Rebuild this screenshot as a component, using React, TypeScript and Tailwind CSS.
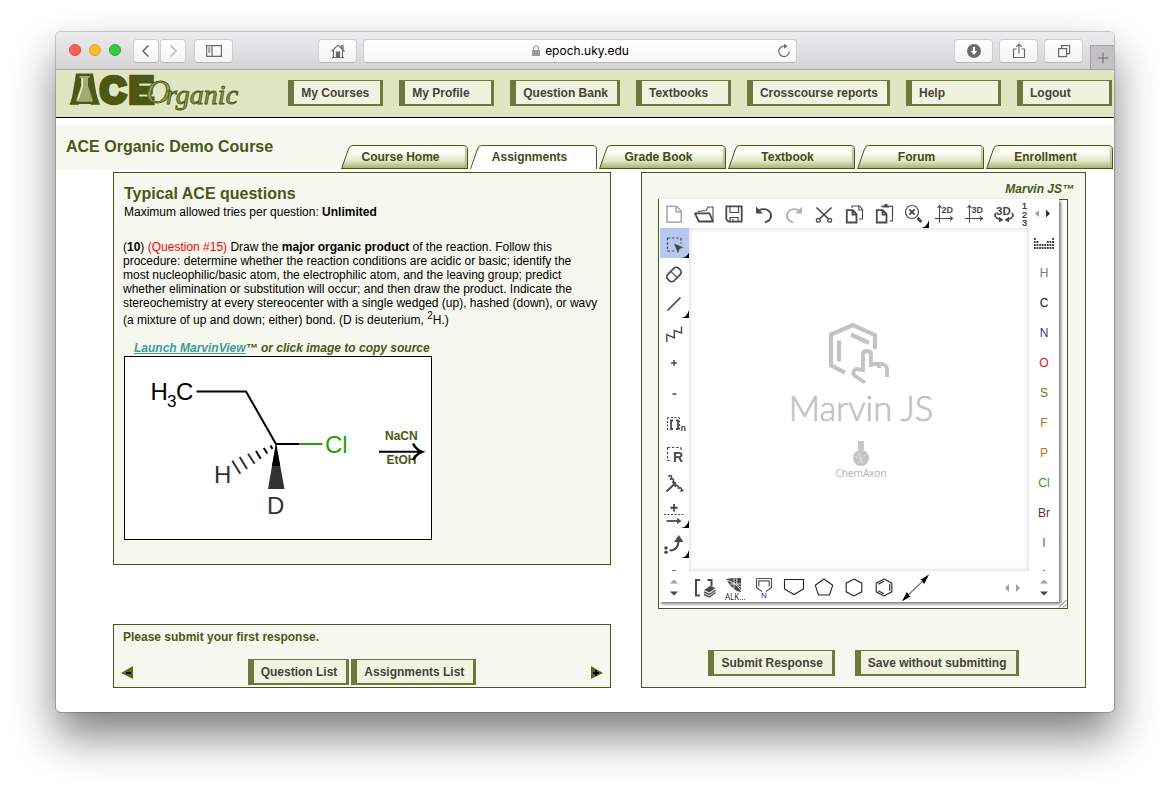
import React from "react";

type Kids = { children: React.ReactNode };

const boxed =
  "inline-block h-[26px] cursor-pointer whitespace-nowrap border-t border-r-[3px] border-b-2 border-l-[6px] border-[#6f783c] bg-[#f0f3df] pt-0.5 pr-[9px] pl-[7px] text-left text-xs leading-[21px] font-bold text-[#44443a]";

function ChromeButton({ label, className, children }: Kids & { label: string; className: string }) {
  return (
    <button
      type="button"
      aria-label={label}
      className={`flex h-6 items-center justify-center rounded border border-[#cfcdcf] border-b-[#b8b6b8] bg-linear-to-b from-white to-[#f4f3f4] ${className}`}
    >
      {children}
    </button>
  );
}

function Glyph({ children, w = 16, h = 16 }: Kids & { w?: number; h?: number }) {
  return (
    <svg width={w} height={h} viewBox={`0 0 ${w} ${h}`} fill="none" stroke="#6b6b6b" strokeWidth="1.2" aria-hidden="true">
      {children}
    </svg>
  );
}

function TitleBar() {
  return (
    <div className="flex h-[38px] items-start rounded-t-[5px] border-b border-[#a3a2a3] bg-linear-to-b from-[#edecee] to-[#d4d2d5] pt-[7px]">
      <div className="flex gap-2 pt-[5px] pl-[13px]">
        <span className="size-3 rounded-full border border-[#e2463f] bg-[#fc605b]" />
        <span className="size-3 rounded-full border border-[#dfa023] bg-[#fdbc2e]" />
        <span className="size-3 rounded-full border border-[#27a931] bg-[#35cb3c]" />
      </div>
      <div className="ml-3 flex gap-px">
        <ChromeButton label="Back" className="w-[26px]">
          <Glyph><path d="M10.500 2.500 5 8l5.500 5.500" strokeWidth="1.600" /></Glyph>
        </ChromeButton>
        <ChromeButton label="Forward" className="w-[26px]">
          <Glyph><path d="M5.500 2.500 11 8l-5.500 5.500" stroke="#bdbdbd" strokeWidth="1.600" /></Glyph>
        </ChromeButton>
      </div>
      <ChromeButton label="Show sidebar" className="ml-2 w-[39px]">
        <Glyph>
          <path d="M.6 2.600h14.800v10.800H.6zM6 2.600v10.800M2 5h2.500M2 7h2.500M2 9h2.500" />
        </Glyph>
      </ChromeButton>
      <ChromeButton label="Home" className="ml-[85px] w-[39px]">
        <Glyph>
          <path d="M1.500 8.500 8 2l6.500 6.500M3.500 7v7.400M12.500 7v7.400M2 14.500h12M11.500 5V2.500h1.500v4" />
          <path d="M6.500 9h3v5h-3z" fill="#6b6b6b" />
        </Glyph>
      </ChromeButton>
      <div className="ml-1.5 flex h-6 flex-1 items-center rounded border border-[#cfcdcf] border-b-[#b8b6b8] bg-linear-to-b from-white to-[#f7f7f7] px-1">
        <div className="flex flex-1 items-center justify-center gap-1 pl-4 font-[Inter,sans-serif] text-xs text-black">
          <svg width="10" height="12" viewBox="0 0 10 12" aria-hidden="true">
            <path d="M1 5h8v6H1z" fill="#999" />
            <path d="M2.500 5V3.500a2.500 2.500 0 0 1 5 0V5" fill="none" stroke="#999" strokeWidth="1.200" />
          </svg>
          <span>epoch.uky.edu</span>
        </div>
        <button type="button" aria-label="Reload">
          <Glyph>
            <path d="M9.500 3.200H8A5.200 5.200 0 1 0 13.200 8.500" />
            <path d="M8 .7v5L11.700 3.200z" fill="#6b6b6b" stroke="none" />
          </Glyph>
        </button>
      </div>
      <div className="ml-[157px] flex gap-1.5">
        <ChromeButton label="Downloads" className="w-[39px]">
          <Glyph>
            <circle cx="8" cy="8" r="7" fill="#6b6b6b" stroke="none" />
            <path d="M8 4v5" stroke="#fff" strokeWidth="2.200" />
            <path d="M4.800 8h6.400L8 12z" fill="#fff" stroke="none" />
          </Glyph>
        </ChromeButton>
        <ChromeButton label="Share" className="w-[39px]">
          <Glyph><path d="M5.500 6h-3v8.500h11V6h-3M8 10.500V1.200M5.200 3.800 8 1l2.800 2.800" /></Glyph>
        </ChromeButton>
        <ChromeButton label="Show all tabs" className="w-[39px]">
          <Glyph><path d="M2.600 5.600h8v8h-8zM5.600 5.600v-3h8v8h-3" /></Glyph>
        </ChromeButton>
      </div>
      <button type="button" aria-label="New tab" className="mt-1.5 ml-[7px] flex h-6 w-6 items-center justify-center border-t border-l border-[#a3a2a3] bg-[#c3c1c4]">
        <Glyph><path d="M8 2.500v11M2.500 8h11" strokeWidth="1" /></Glyph>
      </button>
    </div>
  );
}

function Logo() {
  return (
    <svg width="182" height="47" viewBox="0 0 182 47" className="shrink-0" role="img" aria-label="ACE Organic">
      <g fill="#4c5814" stroke="#4c5814" fontFamily="'Liberation Sans', sans-serif" fontWeight="700">
        <text x="4" y="32.500" fontSize="38" strokeWidth="3.500">A</text>
        <text x="33" y="32.500" fontSize="36" strokeWidth="4.500">C</text>
        <text x="62" y="32.500" fontSize="37" strokeWidth="4.500">E</text>
      </g>
      <path d="M9 3.500h17L31 34H4z" fill="#4c5814" />
      <path d="M12.500 6h10v2H21v8l4.800 14q.4 1.800-1.300 1.800h-14q-1.700 0-1.300-1.800L14 16V8h-1.500z" fill="#a3ab72" />
      <path d="M15.300 8v8.500L11 29.500" fill="none" stroke="#e8ecd0" strokeWidth="1.500" />
      <text x="79" y="33" fontFamily="'Liberation Serif', serif" fontStyle="italic" fontSize="34" fill="#8f9b55" stroke="#4c5814" strokeWidth=".9">
        O
      </text>
      <text x="99" y="34" fontFamily="'Liberation Serif', serif" fontStyle="italic" fontSize="28" fill="#8f9b55" stroke="#4c5814" strokeWidth=".9">
        rganic
      </text>
    </svg>
  );
}

const navItems = ["My Courses", "My Profile", "Question Bank", "Textbooks", "Crosscourse reports", "Help", "Logout"];
const tabs = ["Course Home", "Assignments", "Grade Book", "Textbook", "Forum", "Enrollment"];

function Tab({ label, active }: { label: string; active: boolean }) {
  return (
    <a href="#" aria-current={active ? "page" : undefined} className="relative block h-6 w-[127px] pr-2 text-center text-xs leading-6 font-bold text-[#414b12]">
      <svg className="absolute inset-0" width="127" height="24" viewBox="0 0 127 24" aria-hidden="true">
        <defs>
          <linearGradient id="tabFill" x1="0" y1="0" x2="0" y2="1">
            <stop offset="0" stopColor="#fbfdee" />
            <stop offset=".3" stopColor="#fbfcf8" />
            <stop offset=".65" stopColor="#e3e9c9" />
            <stop offset="1" stopColor="#9eac6a" />
          </linearGradient>
        </defs>
        <path d="M.5 24 7.500 4Q8.700.5 11.500.5H122Q126.500.5 126.500 4.500V24z" fill={active ? "#fff" : "url(#tabFill)"} />
        {!active && <path d="M124.800 3V22" stroke="#aab581" strokeWidth="2" opacity=".7" />}
        <path d="M.5 24 7.500 4Q8.700.5 11.500.5H122Q126.500.5 126.500 4.500V24" fill="none" stroke="#4a5416" strokeWidth="1" />
        {!active && <path d="M.5 23.500H127" stroke="#4a5a10" />}
      </svg>
      <span className="relative">{label}</span>
    </a>
  );
}

function Molecule() {
  return (
    <svg width="306" height="182" viewBox="0 0 306 182" role="img" aria-label="Reaction scheme">
      <g fontFamily="'Liberation Sans', sans-serif" fontSize="24">
        <text x="25.500" y="43">H</text>
        <text x="42" y="50" fontSize="17">3</text>
        <text x="51" y="43">C</text>
        <text x="200" y="95.500" fill="#2a9f0b">Cl</text>
        <text x="89" y="126" fill="#333">H</text>
        <text x="142" y="157" fill="#333">D</text>
      </g>
      <path d="M71.500 34.500H121L151 87h23" fill="none" stroke="#000" strokeWidth="2" />
      <path d="M174 87h23.500" stroke="#2a9f0b" strokeWidth="2" />
      <path d="M151 86 143 132h16.500z" fill="#333" />
      <path d="M151 86 147 109h8.200z" fill="#000" />
      <path d="M107.300 103.700l8 13M114.700 100l7.300 12M123 96.700l6.700 10" stroke="#333" strokeWidth="2" />
      <path d="M131 94l4.700 7.700M138.700 91l3.600 5.500M145.500 88.500l2 3.500" stroke="#000" strokeWidth="2" />
      <g fontFamily="'Liberation Sans', sans-serif" fontSize="12" fontWeight="700" fill="#4a5719">
        <text x="260" y="83">NaCN</text>
        <text x="261.500" y="107">EtOH</text>
      </g>
      <path d="M254 94.800h43" stroke="#000" strokeWidth="2" />
      <path d="M288 86.500q3 6 9 8.300-6 2.200-9 8.200" fill="none" stroke="#000" strokeWidth="2.500" />
    </svg>
  );
}

function Tool({ label, children, className = "", corner = false }: Kids & { label: string; className?: string; corner?: boolean }) {
  return (
    <button type="button" aria-label={label} className={`block h-[30px] w-[30px] shrink-0 ${className}`}>
      <svg width="30" height="30" viewBox="0 0 30 30" fill="none" stroke="#4a4a4a" strokeWidth="1.500" aria-hidden="true">
        {children}
        {corner && <path d="M30 22v8h-8q6-1 8-8z" fill="#000" stroke="none" />}
      </svg>
    </button>
  );
}

const bold = { fontFamily: "'Liberation Sans', sans-serif", fontWeight: 700, fill: "#4a4a4a", stroke: "none" } as const;

function TopTools() {
  return (
    <div className="flex h-[29px]">
      <div className="flex min-w-0 flex-1 overflow-hidden">
        <Tool label="New"><path d="M8 7.300h9.500l4.800 5v11H8zM17 7.300v5.500h5.300" stroke="#a8a8a8" strokeWidth="1.600" /></Tool>
        <Tool label="Open">
          <path d="M6 14.300h14.500l3.500 8.200H9.800z" strokeWidth="1.800" strokeLinejoin="round" />
          <path d="M8.500 12.500 17 11.500l2-3.500h5v14" strokeWidth="1.100" />
        </Tool>
        <Tool label="Save">
          <path d="M9 7.300h13.700v15.400H9.500L7.300 20.500V7.300z" strokeWidth="1.800" />
          <path d="M11 7v6.500h8.500V7M11 23v-4.500h8V23M14 20v3" strokeWidth="1.200" />
        </Tool>
        <Tool label="Undo">
          <path d="M9.500 11.500q5-2.500 9-.5 4 2.300 3.500 6.500-.8 4.500-6 5.800" strokeWidth="1.900" />
          <path d="M7 7.500v7h7z" fill="#4a4a4a" stroke="none" />
        </Tool>
        <Tool label="Redo">
          <path d="M20.500 11.500q-5-2.500-9-.5-4 2.300-3.500 6.500.8 4.500 6 5.800" stroke="#b0b0b0" strokeWidth="1.900" />
          <path d="M23 7.500v7h-7z" fill="#b0b0b0" stroke="none" />
        </Tool>
        <Tool label="Cut">
          <path d="M7.500 8.500 20 20.500M22.500 8.500 10 20.500" strokeWidth="1.700" />
          <circle cx="9.300" cy="21.300" r="1.900" strokeWidth="1.300" />
          <circle cx="20.700" cy="21.300" r="1.900" strokeWidth="1.300" />
        </Tool>
        <Tool label="Copy">
          <path d="M7.800 11.200h6l3.700 4v8.300H7.800zM13.500 11.200v4.500h4" strokeWidth="1.800" />
          <path d="M13 9V7h7.500l3 3.500V20H20M19.800 7v4h3.700" strokeWidth="1.100" />
        </Tool>
        <Tool label="Paste">
          <path d="M7.800 11.200h6l3.700 4v8.300H7.800zM13.500 11.200v4.500h4" strokeWidth="1.800" />
          <path d="M12 7.300h1.500M20.500 7.300h3V22h-3" strokeWidth="1.200" />
          <path d="M13.500 8.500V6.500h2V5h3v1.500h2v2z" fill="#4a4a4a" stroke="none" />
        </Tool>
        <Tool label="Zoom">
          <circle cx="13" cy="13" r="6.500" strokeWidth="1.200" />
          <path d="m10.300 10.300 5.400 5.400M15.700 10.300l-5.400 5.400" strokeWidth="1.800" />
          <path d="m18.500 19 4 4" strokeWidth="3" />
          <path d="M30 21v8h-8q6-1 8-8z" fill="#000" stroke="none" />
        </Tool>
        <Tool label="Clean 2D">
          <path d="M10.500 7v16.500M6 19.500h17.500M8.500 9l2-2.500 2 2.500M21 17.500l2.500 2-2.500 2" strokeWidth="1.100" />
          <text x="12.500" y="14" fontSize="9" {...bold}>2D</text>
        </Tool>
        <Tool label="Clean 3D">
          <path d="M10.500 7v16.500M6 19.500h17.500M8.500 9l2-2.500 2 2.500M21 17.500l2.500 2-2.500 2" strokeWidth="1.100" />
          <text x="12.500" y="14" fontSize="9" {...bold}>3D</text>
        </Tool>
        <Tool label="Rotate in 3D">
          <path d="M7 14q-3.500 4 4 6.500M23 14q3.500 4-4 6.500" strokeWidth="1.700" />
          <path d="M10 17.700v5.500l4.500-2.300zM20 17.700v5.500l-4.500-2.300z" fill="#4a4a4a" stroke="none" />
          <text x="7" y="16" fontSize="11.500" {...bold}>3D</text>
        </Tool>
        <button type="button" aria-label="Map atoms" className="h-[29px] w-[30px]">
          <svg width="10" height="29" viewBox="0 0 10 29" aria-hidden="true">
            <g fontFamily="'Liberation Sans', sans-serif" fontSize="9" fill="#222" stroke="#222" strokeWidth=".2">
              <text x="3" y="10">1</text>
              <text x="3" y="18.500">2</text>
              <text x="3" y="27">3</text>
            </g>
          </svg>
        </button>
      </div>
      <button type="button" aria-label="Scroll toolbar" className="h-[29px] w-[30px] shrink-0">
        <svg width="30" height="29" viewBox="0 0 30 29" aria-hidden="true">
          <path d="M10 11v7l-4-3.500z" fill="#a0a0a0" />
          <path d="M17 10.500v8l4-4z" fill="#333" />
        </svg>
      </button>
    </div>
  );
}

function LeftTools() {
  return (
    <div className="flex w-[30px] shrink-0 flex-col overflow-hidden">
      <Tool label="Select" className="border-l border-white bg-[#b5caee]" corner>
        <path d="M7.500 10H21M7.500 10v13.500M21 10v5.500M7.500 23h7" strokeDasharray="2.500 1.800" strokeWidth="1.200" />
        <path d="m14 15.500 9.500 4-4 1.500-1.500 4.500z" fill="#4a4a4a" stroke="none" />
      </Tool>
      <Tool label="Erase">
        <g transform="rotate(-45 15 16.500)">
          <rect x="7.300" y="12" width="15.400" height="9" rx="3.500" strokeWidth="1.700" />
          <path d="M15 12v9" strokeWidth="1.200" />
        </g>
      </Tool>
      <Tool label="Single bond" corner><path d="M8.500 22.500 21.500 9.500" strokeWidth="1.700" /></Tool>
      <Tool label="Chain"><path d="M7.800 24v-7.500l7.500 3.500v-7.500l7.200 2.500V8.500" strokeWidth="1.400" /></Tool>
      <Tool label="Increase charge"><path d="M12 15h6M15 12v6" /></Tool>
      <Tool label="Decrease charge"><path d="M13.500 16h4" /></Tool>
      <Tool label="Repeating group">
        <path d="M8.500 9.500h12M8.500 9.500V22h2M20.500 21.500V10" strokeDasharray="2 1.500" strokeWidth="1" />
        <path d="M14 12.500h-2v8.500h2M17 12.500h2v8.500h-2" strokeWidth="1.800" />
        <text x="21.500" y="23" fontSize="9" {...bold}>n</text>
      </Tool>
      <Tool label="R-group">
        <path d="M8.500 9.500h13.500M8.500 9.500V22.500h4M22 9.500v3" strokeDasharray="2.500 1.800" strokeWidth="1.200" />
        <text x="14" y="23.500" fontSize="14" {...bold}>R</text>
      </Tool>
      <Tool label="Attachment">
        <path d="M7.500 23.500 16 15.500" strokeWidth="1.900" />
        <path d="M9.300 8.500q3-2 3.200 0t-1.500 3q3-1.500 3.500.3t-1.300 3q3-1.200 3.300.7t-.7 3.300q2.300-2.200 3.200-.7t.3 2.700q1.500-2 2.700-.6t.3 2.500l2.300-.5" strokeWidth="1.600" />
      </Tool>
      <Tool label="Reaction" corner>
        <path d="M11.300 9.800h7.400M15 6v7.500" strokeWidth="1.900" />
        <path d="M5 16.500h20" strokeDasharray="2 1.500" strokeWidth="1" />
        <path d="M7.500 23H19" strokeWidth="1.800" />
        <path d="M18 20v6l4.500-3z" fill="#4a4a4a" stroke="none" />
      </Tool>
      <Tool label="Electron flow" corner>
        <path d="M10.500 22.500q8.500 0 9-9" strokeWidth="2.200" />
        <path d="M15 14h9.500L19.800 7z" fill="#4a4a4a" stroke="none" />
        <circle cx="7" cy="20" r="1.800" fill="#4a4a4a" stroke="none" />
        <circle cx="7" cy="24.300" r="1.800" fill="#4a4a4a" stroke="none" />
      </Tool>
      <Tool label="Lone pair"><path d="M12.500 14q2.500-2.500 5 0" strokeWidth="1.600" /></Tool>
    </div>
  );
}

const elements: [string, string][] = [
  ["H", "text-[#777]"],
  ["C", "text-[#222]"],
  ["N", "text-[#3c35a0]"],
  ["O", "text-[#ee0a12]"],
  ["S", "text-[#7a7420]"],
  ["F", "text-[#a9791d]"],
  ["P", "text-[#ab7c25]"],
  ["Cl", "text-[#2a9f0b]"],
  ["Br", "text-[#5f2f2c]"],
  ["I", "text-[#8a3fb0]"],
];

const dotHeights = [4, 3, 2, 2, 2, 3, 3, 4];

function ElementColumn() {
  return (
    <div className="flex w-[30px] shrink-0 flex-col overflow-hidden">
      <Tool label="Periodic table">
        {dotHeights.map((count, col) =>
          Array.from({ length: count }, (_, row) => (
            <rect key={`${col}-${row}`} x={5 + col * 2.6} y={19 - row * 3} width="1.700" height="2" fill="#333" stroke="none" />
          )),
        )}
      </Tool>
      {elements.map(([symbol, color]) => (
        <button key={symbol} type="button" className={`h-[30px] shrink-0 text-xs leading-[30px] ${color}`}>
          {symbol}
        </button>
      ))}
      <Tool label="More elements"><path d="M14 12h1.200v2H14z" fill="#444" stroke="none" /></Tool>
    </div>
  );
}

function VerticalScroll() {
  return (
    <button type="button" aria-label="Scroll tools" className="h-[31px] w-[30px] shrink-0">
      <svg width="30" height="31" viewBox="0 0 30 31" aria-hidden="true">
        <path d="M11 12.500h8L15 8.500z" fill="#a0a0a0" />
        <path d="M11 20.500h8l-4 4z" fill="#444" />
      </svg>
    </button>
  );
}

function BottomTools() {
  return (
    <div className="flex h-[31px]">
      <VerticalScroll />
      <div className="flex min-w-0 flex-1 overflow-hidden">
        <Tool label="Custom groups">
          <path d="M11 9H7v15.500h4M18.500 9h4v6.500" strokeWidth="2" />
          <path d="m15 19 6-4 5.500 2-6 4.500z" fill="#4a4a4a" stroke="none" />
          <path d="m15 21 5.500 2.500 6-4.500M15 23.500l5.500 2.500 6-4.500" strokeWidth="1.400" />
        </Tool>
        <Tool label="Alkaloids">
          <path d="M7 8q8-1.500 15-1v14q-4 0-7-3-5-4-8-10z" fill="#4a4a4a" stroke="none" />
          <path d="M7 9q10 2 15 11M15 7v11M11 13h11M18 7q-2 8 4 9" stroke="#fff" strokeWidth=".8" />
          <text x="6" y="29" fontFamily="'Noto Sans', sans-serif" fontSize="8" fill="#333" stroke="none">ALK...</text>
        </Tool>
        <Tool label="Pyrrole">
          <path d="M7.500 7.500h15v9L17 20.500M7.500 7.500v9L13 20.500M9.800 9.800h10.400M9.800 9.500v6M20.200 9.500v6" stroke="#555" strokeWidth="1.200" />
          <text x="12" y="27" fontSize="8" fontFamily="'Liberation Sans', sans-serif" fill="#2722a0" stroke="none">N</text>
        </Tool>
        <Tool label="Cyclopentane, flat"><path d="M5.500 8.500h19v9.500L15 23.500 5.500 18z" stroke="#222" strokeWidth="1.100" /></Tool>
        <Tool label="Cyclopentane"><path d="M15 8l8.700 6.300-3.200 9.700h-11L6.300 14.300z" stroke="#222" strokeWidth="1.100" /></Tool>
        <Tool label="Cyclohexane"><path d="m15 8 7.800 4.200v8.600L15 25l-7.800-4.200v-8.600z" stroke="#222" strokeWidth="1.100" /></Tool>
        <Tool label="Benzene">
          <path d="m15 8 7.800 4.200v8.600L15 25l-7.800-4.200v-8.600z" stroke="#222" strokeWidth="1.100" />
          <path d="m9.300 13.300 5.700-3M20.700 13.300v6.500M9.300 19.800l5.700 3" stroke="#222" strokeWidth="1.100" />
        </Tool>
        <Tool label="Arrow">
          <path d="M5 28 28 6" stroke="#777" strokeWidth="1.200" />
          <path d="M30 3.500 21 9l2.500.3-.3 1.200 2 2.500zM3 30.500 12 25l-2.500-.3.300-1.200-2-2.500z" fill="#000" stroke="none" />
        </Tool>
        <button type="button" aria-label="Scroll templates" className="mr-1.5 ml-auto h-[31px] w-5">
          <svg width="20" height="31" viewBox="0 0 20 31" aria-hidden="true">
            <path d="M6 13v8l-4-4zM13 13v8l4-4z" fill="#a0a0a0" />
          </svg>
        </button>
      </div>
      <VerticalScroll />
    </div>
  );
}

function Watermark() {
  return (
    <svg width="160" height="170" viewBox="0 0 160 170" role="img" aria-label="Marvin JS by ChemAxon">
      <g fill="none" stroke="#c3c3c3" strokeWidth="4.200">
        <path d="M66 57.500 52 50.500V19.500L74 10l22 10v14" />
        <path d="M60 25.500v21M72 19.500l18 8.500" />
        <path d="M86 67.500 76 61q-4-4 1-7l7 1V39.500q0-3.500 4-3.500t4 3.500V52M92 49h7q9-1 9 6v7M100 49v4" strokeWidth="3.800" />
      </g>
      <text x="82" y="106" textAnchor="middle" fontFamily="Lato, sans-serif" fontWeight="300" fontSize="34.500" fill="#c3c3c3" stroke="#c3c3c3" strokeWidth=".7">
        Marvin JS
      </text>
      <path d="M79 126h6v9h-6z" fill="#c8c8c8" />
      <circle cx="82" cy="143" r="8" fill="#c3c3c3" />
      <path d="m76 141 6 3 6-5M80 137l2 7-3 5M84 149l-2-5" stroke="#dedede" strokeWidth=".8" fill="none" />
      <text x="82" y="162" textAnchor="middle" fontFamily="'Noto Sans', sans-serif" fontSize="10" fill="#b5b5b5">
        ChemAxon
      </text>
    </svg>
  );
}

function MarvinEditor() {
  return (
    <div className="relative mt-[3px] mr-[17px] ml-4 border border-[#4a5416] bg-white pb-1.5">
      <div className="-mt-px mr-2 bg-white shadow-[2px_2px_3px_0px_#777]">
        <TopTools />
        <div className="flex h-[343px]">
          <LeftTools />
          <div className="flex flex-1 justify-center bg-white pt-[87px] shadow-[inset_0_0_4px_1px_#ddd]">
            <Watermark />
          </div>
          <ElementColumn />
        </div>
        <BottomTools />
      </div>
      <svg className="absolute right-0 bottom-0" width="9" height="9" viewBox="0 0 9 9" aria-hidden="true">
        <path d="M1 8.500 8.500 1M5 8.500 8.500 5" stroke="#666" strokeWidth="1" />
      </svg>
    </div>
  );
}

const panel = "border border-[#4a5416] bg-[#f6f7ee]";

export default function App() {
  return (
    <div className="bg-white px-14 pt-8 pb-20 font-['Liberation_Sans',Arial,sans-serif] text-xs leading-[14px] text-black">
      <div className="rounded-[5px] bg-white shadow-[0_0_1px_1px_rgba(0,0,0,0.2),0_24px_44px_rgba(0,0,0,0.5)]">
        <TitleBar />
        <header className="flex h-12 items-start justify-between border-b border-black bg-[#e0e6c1] pr-0.5 pl-[11px]">
          <Logo />
          <nav aria-label="Main" className="flex gap-4 pt-2.5">
            {navItems.map((item) => (
              <a key={item} href="#" className={`${boxed} min-w-[95px]`}>{item}</a>
            ))}
          </nav>
        </header>
        <div className="mt-[7px] flex h-11 justify-between bg-[#f6f7ee] pr-px pl-2.5">
          <h1 className="pt-[13px] text-base leading-[18px] font-bold text-[#4a5719]">ACE Organic Demo Course</h1>
          <nav aria-label="Course" className="flex items-end gap-0.5">
            {tabs.map((tab) => (
              <Tab key={tab} label={tab} active={tab === "Assignments"} />
            ))}
          </nav>
        </div>
        <main className="mt-[3px] grid grid-cols-[minmax(0,498fr)_minmax(0,445fr)] gap-x-[30px] pr-7 pb-6 pl-[57px]">
          <div className="flex flex-col justify-between">
            <section className={`${panel} pt-3 pr-2.5 pb-6 pl-[9px]`}>
              <h2 className="pl-px text-base leading-[18px] font-bold text-[#4a5719]">Typical ACE questions</h2>
              <p className="mt-0.5 pl-px">
                Maximum allowed tries per question: <b>Unlimited</b>
              </p>
              <p className="mt-[21px]">
                (<b>10</b>) <span className="text-[#f00]">(Question #15)</span> Draw the <b>major organic product</b> of the
                reaction. Follow this procedure: determine whether the reaction conditions are acidic or basic; identify the
                most nucleophilic/basic atom, the electrophilic atom, and the leaving group; predict whether elimination or
                substitution will occur; and then draw the product. Indicate the stereochemistry at every stereocenter with a
                single wedged (up), hashed (down), or wavy (a mixture of up and down; either) bond. (D is deuterium,{" "}
                <sup className="static align-super text-[10px] leading-3">2</sup>H.)
              </p>
              <p className="mt-3.5 pl-[11px] font-bold text-[#4a5719] italic">
                <a href="#" className="text-[#3f9d9d] underline">Launch MarvinView</a>™ or click image to copy source
              </p>
              <button type="button" className="mt-px ml-px block border border-black bg-white">
                <Molecule />
              </button>
            </section>
            <section className={`${panel} px-[7px] pt-[5px] pb-0.5`}>
              <p className="pl-0.5 font-bold text-[#4a5719]">Please submit your first response.</p>
              <div className="mt-[15px] flex items-center justify-between">
                <button type="button" aria-label="Previous question">
                  <svg width="12" height="13" viewBox="0 0 12 13" aria-hidden="true">
                    <path d="M12 0v13L0 7z" fill="#5c661c" />
                    <path d="M5 7h5" stroke="#000" strokeWidth="1.800" />
                  </svg>
                </button>
                <div className="flex gap-0.5">
                  <button type="button" className={boxed}>Question List</button>
                  <button type="button" className={boxed}>Assignments List</button>
                </div>
                <button type="button" aria-label="Next question">
                  <svg width="12" height="13" viewBox="0 0 12 13" aria-hidden="true">
                    <path d="M0 0v13l12-6z" fill="#5c661c" />
                    <path d="M2 7h6M5 4v6" stroke="#000" strokeWidth="1.800" />
                  </svg>
                </button>
              </div>
            </section>
          </div>
          <section className={`${panel} pt-[9px] pb-[11px]`}>
            <h2 className="pr-[11px] text-right font-bold text-[#4a5719] italic">Marvin JS™</h2>
            <MarvinEditor />
            <div className="mt-[41px] flex justify-center gap-5">
              <button type="button" className={boxed}>Submit Response</button>
              <button type="button" className={boxed}>Save without submitting</button>
            </div>
          </section>
        </main>
      </div>
    </div>
  );
}
